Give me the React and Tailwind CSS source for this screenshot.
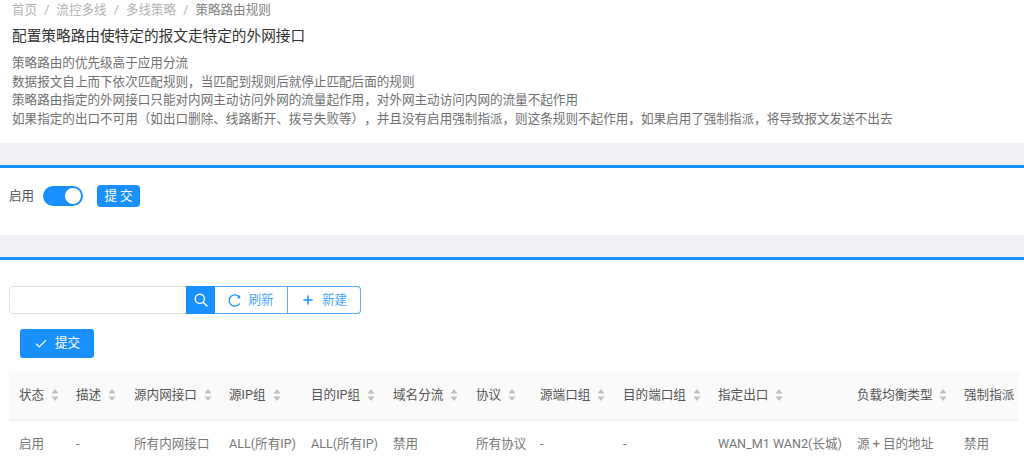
import { Plus, Check } from 'lucide-react';

const notes = [
  '策略路由的优先级高于应用分流',
  '数据报文自上而下依次匹配规则，当匹配到规则后就停止匹配后面的规则',
  '策略路由指定的外网接口只能对内网主动访问外网的流量起作用，对外网主动访问内网的流量不起作用',
  '如果指定的出口不可用（如出口删除、线路断开、拨号失败等），并且没有启用强制指派，则这条规则不起作用，如果启用了强制指派，将导致报文发送不出去',
];

const crumbs = ['首页', '流控多线', '多线策略'];

const columns = [
  { title: '状态', value: '启用', width: 'w-[57px]' },
  { title: '描述', value: '-', width: 'w-[58px]' },
  { title: '源内网接口', value: '所有内网接口', width: 'w-[95px]' },
  { title: '源IP组', value: 'ALL(所有IP)', width: 'w-[82px]' },
  { title: '目的IP组', value: 'ALL(所有IP)', width: 'w-[82px]' },
  { title: '域名分流', value: '禁用', width: 'w-[83px]' },
  { title: '协议', value: '所有协议', width: 'w-[64px]' },
  { title: '源端口组', value: '-', width: 'w-[83px]' },
  { title: '目的端口组', value: '-', width: 'w-[95px]' },
  { title: '指定出口', value: 'WAN_M1 WAN2(长城)', width: 'w-[139px]' },
  { title: '负载均衡类型', value: '源 + 目的地址', width: 'w-[107px]' },
  { title: '强制指派', value: '禁用', width: 'w-[65px]', noSort: true },
];

const SortIcon = () => (
  <svg width="8" height="14" viewBox="0 0 8 14" className="shrink-0 ml-[7px]">
    <path d="M4 1 L7.5 5.5 H0.5 Z" fill="#bfbfbf" />
    <path d="M4 13 L7.5 8.5 H0.5 Z" fill="#bfbfbf" />
  </svg>
);

const SearchIcon = () => (
  <svg width="14" height="14" viewBox="0 0 14 14" fill="none" stroke="white" strokeWidth="1.4" strokeLinecap="round">
    <circle cx="5.8" cy="5.8" r="4.6" />
    <path d="M9.2 9.2 L13 13" />
  </svg>
);

const ReloadIcon = () => (
  <svg width="13" height="13" viewBox="0 0 13 13" fill="none" className="mr-[7px]">
    <path d="M11.3 3.2 A5.6 5.6 0 1 0 11.3 9.8" stroke="#1890ff" strokeWidth="1.3" strokeLinecap="round" />
    <path d="M12.2 0.8 V4.2 H8.9 Z" fill="#1890ff" />
  </svg>
);

const App = () => {
  return (
    <div className="w-[1024px] h-[459px] overflow-hidden bg-white text-[12.58px] [text-spacing-trim:space-all] font-['Roboto','Noto_Sans_CJK_SC',sans-serif]">
      {/* Page header */}
      <div className="h-[143px] pl-3 pt-[1px]">
        <div className="flex items-center h-4 mt-[1px] text-[#b3b3b3]">
          {crumbs.map((c) => (
            <span key={c} className="flex">
              <span>{c}</span>
              <span className="mx-[7px]">/</span>
            </span>
          ))}
          <span className="text-[#808080]">策略路由规则</span>
        </div>
        <h1 className="mt-[9px] text-[14.67px] leading-[18px] font-normal text-[#333]">
          配置策略路由使特定的报文走特定的外网接口
        </h1>
        <div className="mt-[9px] text-[#707070]">
          {notes.map((n) => (
            <p key={n} className="leading-[18.7px] whitespace-nowrap">{n}</p>
          ))}
        </div>
      </div>

      <div className="h-[22px] bg-[#f0f2f5]" />

      {/* Enable switch */}
      <div className="h-[70px] border-t-[3px] border-[#1890ff] flex items-center pl-[9px] pb-[11px]">
        <span className="text-[#555] w-[34px]">启用</span>
        <div className="w-[40px] h-5 rounded-full bg-[#1890ff] flex items-center justify-end pr-[2px]">
          <div className="w-4 h-4 rounded-full bg-white" />
        </div>
        <button className="ml-[14px] w-[43px] h-[22px] rounded-[4px] bg-[#1890ff] text-white tracking-[3px] pl-[3px]">
          提交
        </button>
      </div>

      <div className="h-[22px] bg-[#f0f2f5]" />

      {/* Rules */}
      <div className="border-t-[3px] border-[#1890ff] pt-[26px]">
        <div className="flex h-[28px] ml-[9px]">
          <div className="w-[177px] border border-r-0 border-[#e4e4e4] rounded-l-[4px]" />
          <button className="w-[29px] bg-[#1890ff] flex items-center justify-center">
            <SearchIcon />
          </button>
          <button className="w-[73px] border border-[#5aaeff] border-l-0 flex items-center justify-center text-[#1890ff]">
            <ReloadIcon />
            <span className="opacity-80">刷新</span>
          </button>
          <button className="w-[73px] border border-[#5aaeff] border-l-0 rounded-r-[4px] flex items-center justify-center text-[#1890ff]">
            <Plus size={14} strokeWidth={2.5} className="mr-[7px]" />
            <span className="opacity-80">新建</span>
          </button>
        </div>

        <button className="ml-5 mt-[15px] w-[74px] h-[29px] rounded-[3px] bg-[#1890ff] text-white flex items-center justify-center">
          <Check size={14} className="mr-[7px]" />
          提交
        </button>

        <table className="ml-[9px] mt-[14px] table-fixed border-collapse">
          <thead>
            <tr className="h-[48px] bg-[#fafafa] border-b-2 border-[#f3f3f3]">
              {columns.map((c) => (
                <th key={c.title} className={`${c.width} pl-[10px] text-left font-normal text-[#555] whitespace-nowrap`}>
                  <div className="flex items-center">
                    {c.title}
                    {!c.noSort && <SortIcon />}
                  </div>
                </th>
              ))}
            </tr>
          </thead>
          <tbody>
            <tr className="h-[48px]">
              {columns.map((c) => (
                <td key={c.title} className="pl-[10px] text-[#777] whitespace-nowrap">{c.value}</td>
              ))}
            </tr>
          </tbody>
        </table>
      </div>
    </div>
  );
};

export default App;
